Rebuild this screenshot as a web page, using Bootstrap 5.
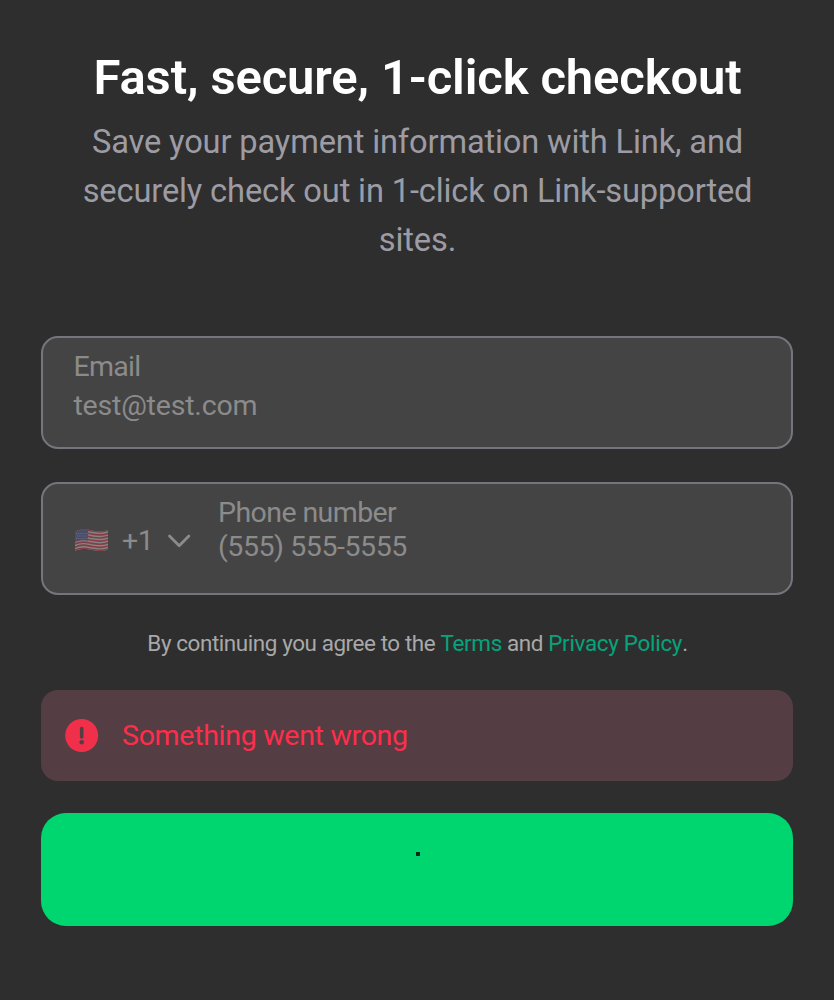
<!DOCTYPE html>
<html lang="en">
<head>
<meta charset="utf-8">
<meta name="viewport" content="width=device-width, initial-scale=1">
<title>Link checkout</title>
<link href="https://cdn.jsdelivr.net/npm/bootstrap@5.3.0/dist/css/bootstrap.min.css" rel="stylesheet">
<style>
body{background:#2e2e2e;font-family:Roboto,sans-serif;color:#a8a8a8;height:1000px;overflow:hidden}
.signup{padding:45px 41px 0}
.title{font-size:49px;line-height:65px;font-weight:600;color:#fff;letter-spacing:-.14px;padding-left:1px}
.lede{font-size:32.64px;line-height:49px;color:#9d9ca4;margin:8px 0 71px;letter-spacing:-.14px;padding-left:1px}
.field{height:113px;border:2px solid #76757d;border-radius:17px;background:#444;color:#8b8b8b;font-size:28.56px;padding:0 31px}
.field + .field{margin-top:33px}
.field label,.field .entry{display:block;line-height:34px;white-space:nowrap}
.field label{padding-top:12px;letter-spacing:-.6px}
.email label,.email .entry{margin-left:-.6px}
.email label{letter-spacing:-.75px}
.field .address{margin-top:5px;letter-spacing:-.2px}
.entry{letter-spacing:-.45px}
.dial{width:144px;padding-top:5px}
.legal{font-size:22.44px;line-height:34px;margin:31px 0 30px;letter-spacing:-.42px;padding-left:1px}
.legal a{color:#05a47c;letter-spacing:-.3px}
.notice{height:90.5px;border-radius:17px;background:#553e43;color:#ff2d4c;font-size:28.56px;letter-spacing:-.31px;padding:0 24px;gap:23px}
.join{height:113px;border-radius:25px;background:#00d66f;margin-top:32.5px;border:0}
.join:hover{background:#00d66f}
</style>
</head>
<body>
<main class="signup">
  <h1 class="title text-center mb-0">Fast, secure, 1-click checkout</h1>
  <p class="lede text-center">Save your payment information with Link, and<br>securely check out in 1-click on Link-supported<br>sites.</p>
  <div class="field email">
    <label>Email</label>
    <span class="entry address">test@test.com</span>
  </div>
  <div class="field d-flex">
    <div class="dial d-flex align-items-center flex-shrink-0">
      <svg width="34" height="24" viewBox="0 0 34 24">
        <defs><clipPath id="wave"><path d="M1 2.5C8-1 13 .5 18 1.5S28 3 34 1V20.500c-6 2.500-11 1.500-16 .5S7 19 1 22z"/></clipPath></defs>
        <g clip-path="url(#wave)">
          <path fill="#858383" d="M0 0h34v24H0z"/>
          <g fill="none" stroke="#843e45" stroke-width="1.65">
            <path id="s" d="M0 3C8-.8 13 1 18 2S28 3.600 34 1.400"/>
            <use href="#s" y="3.1"/><use href="#s" y="6.2"/><use href="#s" y="9.3"/><use href="#s" y="12.4"/><use href="#s" y="15.5"/><use href="#s" y="18.6"/>
          </g>
          <path fill="#4c4d69" d="M0 0h14v11.800C9 10.800 5 11.500 0 13.300z"/>
          <path d="M2 4.500h12M3 7h11M2 9.500h12" stroke="#77778a" stroke-width=".7" stroke-dasharray="1 1.200"/>
        </g>
      </svg>
      <span class="entry" style="margin-left:14px">+1</span>
      <svg class="ms-auto" style="margin-right:27px" width="24" height="16" viewBox="0 0 24 16"><path d="M2.500 3l9.700 9.700 9.700-9.700" fill="none" stroke="#8b8b8b" stroke-width="2.8" stroke-linecap="round" stroke-linejoin="round"/></svg>
    </div>
    <div>
      <label>Phone number</label>
      <span class="entry">(555) 555-5555</span>
    </div>
  </div>
  <p class="legal text-center">By continuing you agree to the <a class="text-decoration-none" href="#">Terms</a> and <a class="text-decoration-none" href="#">Privacy Policy</a>.</p>
  <div class="notice d-flex align-items-center" role="alert">
    <svg width="34" height="34" viewBox="0 0 34 34"><circle cx="16.7" cy="17.5" r="16.5" fill="#f0304a"/><path d="M16.7 10.500v8.500" stroke="#553e43" stroke-width="3.6" stroke-linecap="round"/><circle cx="16.7" cy="24.200" r="2.3" fill="#553e43"/></svg>
    <span style="padding-top:2px">Something went wrong</span>
  </div>
  <button class="join btn w-100 d-flex justify-content-center" type="button" aria-label="Join Link">
    <svg width="6" height="6" viewBox="0 0 6 6" style="margin:31.5px 0 0 2px"><path d="M1 1h4v4H1z" fill="#002b17"/></svg>
  </button>
</main>
<script src="https://cdn.jsdelivr.net/npm/bootstrap@5.3.0/dist/js/bootstrap.bundle.min.js"></script>
</body>
</html>
